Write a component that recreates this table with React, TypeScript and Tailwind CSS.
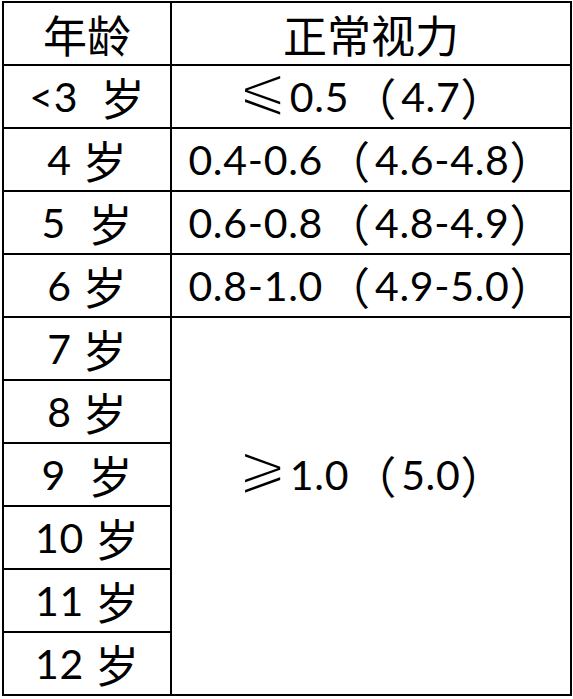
import React from 'react';

// CJK glyphs and full-width brackets come from the Noto CJK face, a bit larger than the digits
const Han: React.FC<{ children: React.ReactNode; className?: string }> = ({ children, className = '' }) => (
  <span className={`font-['Noto_Sans_CJK_SC',sans-serif] text-[44px] tracking-normal ${className}`}>{children}</span>
);

const Open = () => <Han className="ml-[3px] mr-[5px]">（</Han>;
const Close = () => <Han>）</Han>;

// thin, wide relation sign: white outline shaves the DejaVu strokes down
const Rel: React.FC<{ children: React.ReactNode }> = ({ children }) => (
  <span className="inline-block font-['DejaVu_Sans',sans-serif] text-[60px] tracking-normal mr-[2px] [-webkit-text-stroke:2.4px_white] -translate-y-[9px]">
    {children}
  </span>
);

const Cell: React.FC<{ children?: React.ReactNode; className?: string }> = ({ children, className = '' }) => (
  <div className={`bg-white flex items-center justify-center whitespace-pre leading-none ${className}`}>
    {children}
  </div>
);

const Age: React.FC<{ n: string; gap?: string }> = ({ n, gap = ' ' }) => (
  <Cell>
    {n}
    {gap}
    <Han>岁</Han>
  </Cell>
);

const Range: React.FC<{ a: string; b: string }> = ({ a, b }) => (
  <Cell>
    {a}
    <Open />
    {b}
    <Close />
  </Cell>
);

export default function App() {
  return (
    <div className="bg-white w-[573px] h-[699px] pt-[1px] pl-[2px] font-['Lato',sans-serif] text-[41px] tracking-[0.7px] text-black">
      <div className="grid w-[570px] grid-cols-[166px_398px] grid-rows-[repeat(11,61px)] gap-[2px] bg-black p-[2px]">
        <Cell>
          <Han>年龄</Han>
        </Cell>
        <Cell>
          <Han>正常视力</Han>
        </Cell>

        <Age n="<3" gap="  " />
        <Cell>
          <Rel>⩽</Rel>
          0.5
          <Open />
          4.7
          <Close />
        </Cell>

        <Age n="4" />
        <Range a="0.4-0.6" b="4.6-4.8" />

        <Age n="5" gap="  " />
        <Range a="0.6-0.8" b="4.8-4.9" />

        <Age n="6" />
        <Range a="0.8-1.0" b="4.9-5.0" />

        <Age n="7" />
        <Cell className="col-start-2 row-span-6 pb-[63px]">
          <Rel>⩾</Rel>
          1.0
          <Open />
          5.0
          <Close />
        </Cell>
        <Age n="8" />
        <Age n="9" gap="  " />
        <Age n="10" />
        <Age n="11" />
        <Age n="12" />
      </div>
    </div>
  );
}
